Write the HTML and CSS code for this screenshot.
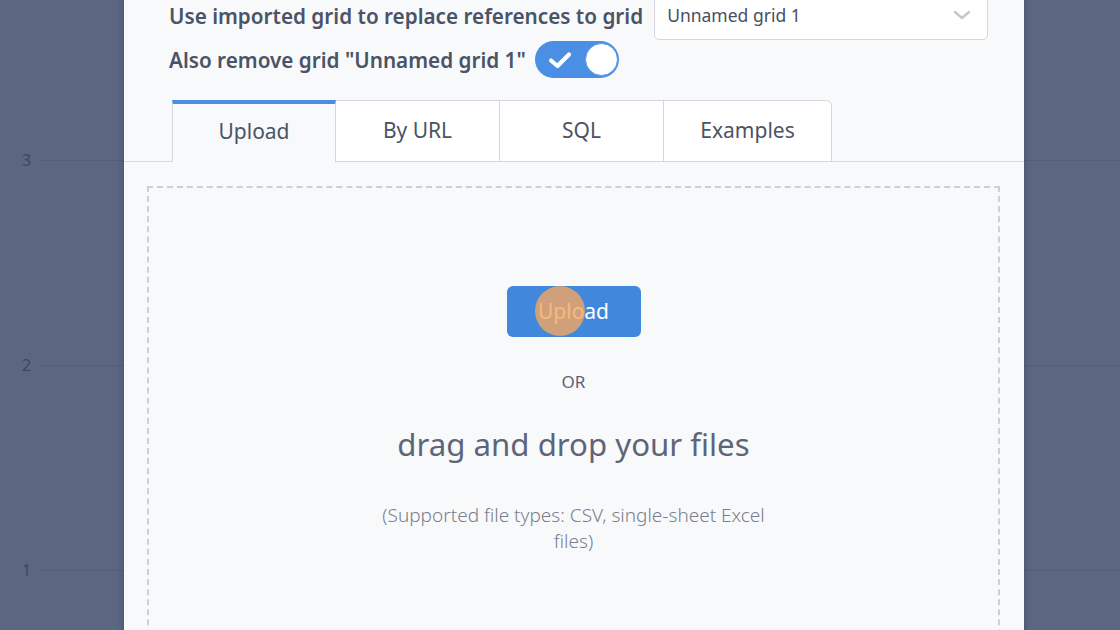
FILE: index.html
```html
<!DOCTYPE html>
<html>
<head>
<meta charset="utf-8">
<link rel="stylesheet" href="styles.css">
</head>
<body>
<div class="chart">
  <div class="gridline" style="top:160px"><span class="tick">3</span></div>
  <div class="gridline" style="top:365px"><span class="tick">2</span></div>
  <div class="gridline" style="top:570px"><span class="tick">1</span></div>
</div>
<div class="modal">
  <div class="row row-first">
    <span class="label">Use imported grid to replace references to grid</span>
    <div class="select">
      <span>Unnamed grid 1</span>
      <svg class="chev" width="18" height="12" viewBox="0 0 18 12"><path d="M2 3 L9 9 L16 3" fill="none" stroke="#c3c7cf" stroke-width="2.4" stroke-linecap="round" stroke-linejoin="round"/></svg>
    </div>
  </div>
  <div class="row row-second">
    <span class="label">Also remove grid "Unnamed grid 1"</span>
    <div class="toggle">
      <svg class="check" width="24" height="18" viewBox="0 0 24 18"><path d="M3 9.5 L9.5 15 L21 3.5" fill="none" stroke="#fff" stroke-width="4.2" stroke-linecap="round" stroke-linejoin="round"/></svg>
      <span class="knob"></span>
    </div>
  </div>
  <div class="tabs">
    <div class="tab active">Upload</div>
    <div class="tab">By URL</div>
    <div class="tab">SQL</div>
    <div class="tab last">Examples</div>
  </div>
  <div class="dropzone">
    <div class="btn-wrap">
      <button class="upload-btn">Upload</button>
      <span class="cursor"></span>
    </div>
    <div class="or">OR</div>
    <div class="drag">drag and drop your files</div>
    <div class="types">(Supported file types: CSV, single-sheet Excel files)</div>
  </div>
</div>
</body>
</html>
```

FILE: styles.css
```css
html, body {
  margin: 0;
  padding: 0;
  width: 1120px;
  height: 630px;
  overflow: hidden;
}
body {
  background: #5b6680;
  font-family: "Noto Sans", "Open Sans", sans-serif;
  position: relative;
}
.chart {
  position: absolute;
  inset: 0;
}
.gridline {
  position: absolute;
  left: 40px;
  right: 0;
  height: 1px;
  background: #535d76;
}
.tick {
  position: absolute;
  left: -18px;
  top: -11px;
  font-size: 16px;
  color: #3e4760;
}
.modal {
  position: relative;
  margin-left: 124px;
  width: 900px;
  height: 660px;
  margin-top: -8px;
  background: #f8f9fb;
  box-shadow: 0 0 6px rgba(30, 38, 60, 0.35);
}
.row {
  display: flex;
  align-items: center;
  padding-left: 45px;
}
.label {
  font-size: 20.7px;
  font-weight: 600;
  color: #4b5366;
}
.row-first {
  height: 48px;
}
.select {
  margin-left: 11px;
  width: 334px;
  height: 48px;
  box-sizing: border-box;
  border: 1px solid #d3d6dc;
  border-radius: 0 0 5px 5px;
  background: #fff;
  display: flex;
  align-items: center;
  justify-content: space-between;
  padding: 0 16px 2px 12px;
  font-size: 17.5px;
  color: #474f62;
}
.row-second {
  margin-top: 1px;
  height: 37px;
}
.toggle {
  margin-left: 9px;
  width: 84px;
  height: 37px;
  border-radius: 19px;
  background: #4a8fe3;
  display: flex;
  align-items: center;
  justify-content: space-between;
  padding: 0 1px 0 13px;
  box-sizing: border-box;
}
.knob {
  width: 33px;
  height: 33px;
  border-radius: 50%;
  background: #fff;
  border: 1px solid #5a97e0;
  box-sizing: border-box;
}
.tabs {
  margin-top: 22px;
  display: flex;
  padding-left: 48px;
  border-bottom: 1px solid #d6d9df;
  height: 61px;
}
.tab {
  width: 164px;
  box-sizing: border-box;
  height: 62px;
  background: #fff;
  border: 1px solid #d3d6dc;
  border-left: none;
  display: flex;
  align-items: center;
  justify-content: center;
  font-size: 21px;
  color: #4b5366;
  padding-bottom: 2px;
}
.tab.active {
  width: 164px;
  background: #f8f9fb;
  border-left: 1px solid #d3d6dc;
  border-top: 4px solid #4a8fe3;
  border-bottom: none;
  padding-bottom: 5px;
  position: relative;
  z-index: 1;
}
.tab.last {
  width: 168px;
  border-radius: 0 6px 0 0;
}
.dropzone {
  margin: 24px 24px 0 23px;
  height: 520px;
  border: 2px dashed #cdd1d7;
  display: flex;
  flex-direction: column;
  align-items: center;
  padding-top: 98px;
  box-sizing: border-box;
}
.btn-wrap {
  position: relative;
}
.upload-btn {
  width: 134px;
  height: 51px;
  border: none;
  border-radius: 6px;
  background: #4188dd;
  color: #fff;
  font-family: inherit;
  font-size: 21px;
  padding: 0 0 2px;
  display: block;
}
.cursor {
  position: absolute;
  left: 28px;
  top: 0;
  width: 50px;
  height: 50px;
  border-radius: 50%;
  background: rgba(242, 166, 96, 0.8);
}
.or {
  margin-top: 33px;
  font-size: 17px;
  color: #5c6376;
}
.drag {
  margin-top: 30px;
  font-size: 31.2px;
  color: #5e6578;
}
.types {
  margin-top: 37px;
  width: 400px;
  text-align: center;
  font-size: 19px;
  line-height: 26px;
  font-weight: 300;
  color: #7a7f8c;
}
```
